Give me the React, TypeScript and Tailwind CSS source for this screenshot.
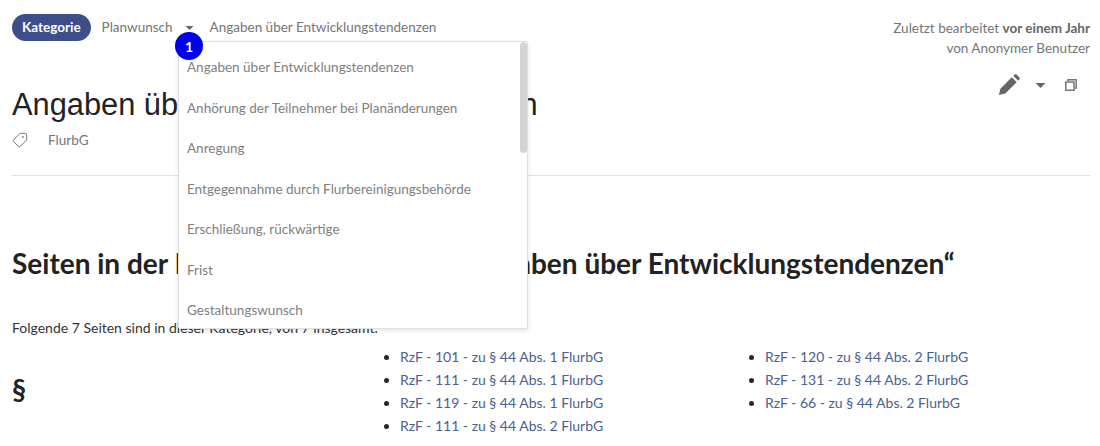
import { Tag } from 'lucide-react';

const menuItems = [
  'Angaben über Entwicklungstendenzen',
  'Anhörung der Teilnehmer bei Planänderungen',
  'Anregung',
  'Entgegennahme durch Flurbereinigungsbehörde',
  'Erschließung, rückwärtige',
  'Frist',
  'Gestaltungswunsch',
  'Hinweis',
];

const columnTwo = [
  'RzF - 101 - zu § 44 Abs. 1 FlurbG',
  'RzF - 111 - zu § 44 Abs. 1 FlurbG',
  'RzF - 119 - zu § 44 Abs. 1 FlurbG',
  'RzF - 111 - zu § 44 Abs. 2 FlurbG',
];

const columnThree = [
  'RzF - 120 - zu § 44 Abs. 2 FlurbG',
  'RzF - 131 - zu § 44 Abs. 2 FlurbG',
  'RzF - 66 - zu § 44 Abs. 2 FlurbG',
];

function Caret({ className }: { className: string }) {
  return (
    <svg viewBox="0 0 10 5" className={className} fill="currentColor">
      <path d="M0 0h10L5 5z" />
    </svg>
  );
}

function PageList({ items }: { items: string[] }) {
  return (
    <ul className="list-disc pl-[23px] text-[14px] leading-[23px] text-[#282828]">
      {items.map((item, i) => (
        <li key={i}>
          <span className="text-[#4a5f8f]">{item}</span>
        </li>
      ))}
    </ul>
  );
}

export default function App() {
  return (
    <div className="relative h-[446px] w-[1100px] overflow-hidden bg-white font-['Lato','Noto_Sans',sans-serif] text-[14px] text-[#333]">
      <div className="pl-3 pr-[10px] pt-[14px]">
        {/* Top bar */}
        <div className="flex items-start justify-between">
          <div className="flex h-[27px] items-center text-[13.5px] text-[#757575]">
            <span className="flex h-[27px] items-center rounded-full bg-[#3d4f8a] px-[10px] font-bold text-white">
              Kategorie
            </span>
            <span className="ml-[11px]">Planwunsch</span>
            <Caret className="ml-[12px] h-[4px] w-[9px] text-[#666]" />
            <span className="ml-[16px]">Angaben über Entwicklungstendenzen</span>
          </div>
          <div className="mt-[4px] text-right text-[13.5px] leading-[20px] text-[#757575]">
            <div>
              Zuletzt bearbeitet <span className="font-bold text-[#666]">vor einem Jahr</span>
            </div>
            <div>von Anonymer Benutzer</div>
          </div>
        </div>

        {/* Title */}
        <div className="flex items-start justify-between">
          <h1 className="mt-[27px] font-['Liberation_Sans',Arial,sans-serif] text-[30.8px] leading-[40px] text-[#222]">
            Angaben über Entwicklungstendenzen
          </h1>
          <div className="mr-[13px] mt-[16px] flex items-center text-[#666]">
            <svg viewBox="0 0 24 24" className="h-[22px] w-[22px]" fill="currentColor">
              <path d="M1 23l1.6-7L15 3.600l5.400 5.400L8 21.400zM16.600 2l1.600-1.400c.6-.5 1.400-.5 2 0l3.200 3.200c.5.6.5 1.400 0 2L22 7.400z" />
            </svg>
            <Caret className="ml-[15px] h-[5px] w-[11px]" />
            <svg viewBox="0 0 12 12" className="ml-[19px] h-[12px] w-[12px] text-[#777]" fill="none" stroke="currentColor" strokeWidth="1.500">
              <path d="M3 2V.8h8.200V9H10" />
              <path d="M.8 3h8.200v8.200H.8z" />
            </svg>
          </div>
        </div>

        {/* Tags */}
        <div className="mt-[5px] flex h-[20px] items-center text-[13.5px] text-[#757575]">
          <Tag size={16} strokeWidth={1.5} className="-scale-x-100 text-[#777]" />
          <span className="ml-[20px]">FlurbG</span>
        </div>

        <hr className="mt-[25px] border-[#e0e0e0]" />

        <h2 className="mt-[69px] text-[28px] font-bold leading-[36px] text-[#222]">
          Seiten in der Kategorie
          <span className="ml-[160px]">„Angaben über Entwicklungstendenzen“</span>
        </h2>
        <p className="mt-[37px] leading-[20px]">Folgende 7 Seiten sind in dieser Kategorie, von 7 insgesamt.</p>

        <div className="mt-[7px] grid grid-cols-[365px_365px_1fr]">
          <div className="pt-[26px] text-[28px] font-bold leading-[36px] text-[#222]">§</div>
          <PageList items={columnTwo} />
          <PageList items={columnThree} />
        </div>
      </div>

      {/* Dropdown over content */}
      <div className="absolute left-[178px] top-[41px] h-[288px] w-[350px] overflow-hidden rounded-[2px] border border-[#e0e0e0] bg-white shadow-[0_2px_4px_rgba(0,0,0,0.1)]">
        <div className="pl-[8px] pt-[5px]">
          {menuItems.map((item) => (
            <div key={item} className="flex h-[40.500px] items-center text-[13.500px] text-[#808080]">
              {item}
            </div>
          ))}
        </div>
        <div className="absolute right-0 top-0 h-[111px] w-[7px] rounded-full bg-[#d4d4d4]" />
      </div>

      {/* Step badge */}
      <div className="absolute left-[175px] top-[32px] flex h-[28px] w-[28px] items-center justify-center rounded-full bg-[#0000ee] text-[14px] font-bold text-white">
        1
      </div>
    </div>
  );
}
